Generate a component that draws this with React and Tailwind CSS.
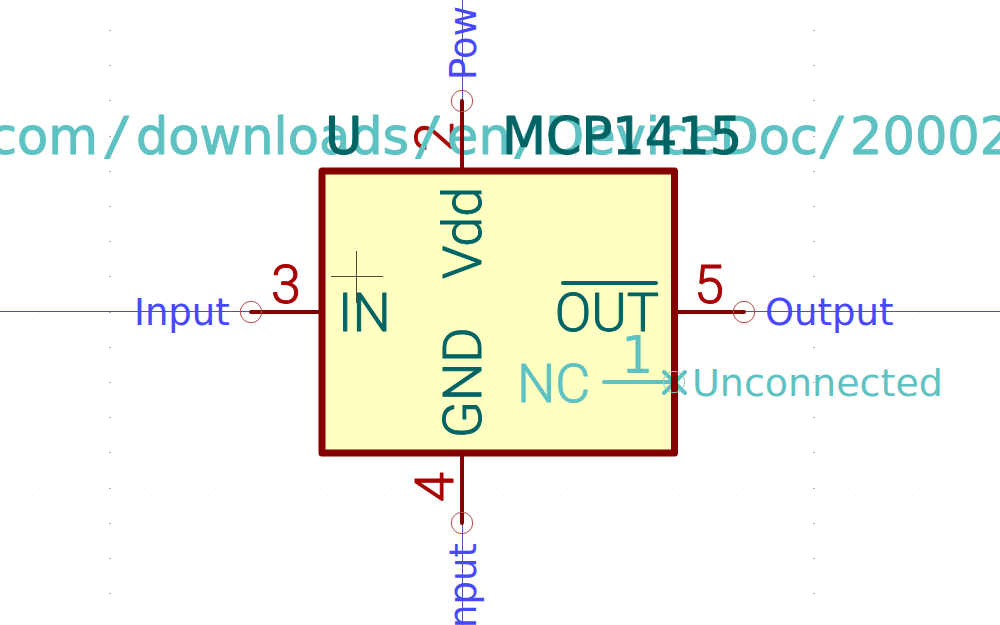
const STEP = 35.2;
const ORIGIN_X = 110;
const ORIGIN_Y = 30.5;

const columns = Array.from({ length: 29 }, (_, i) => i - 3);
const rows = Array.from({ length: 18 }, (_, i) => i);

function Grid() {
  return (
    <g>
      {columns.map((c) =>
        rows.map((r) => (
          <rect
            key={c + ":" + r}
            x={Math.round(ORIGIN_X + c * STEP - 1)}
            y={Math.round(ORIGIN_Y + r * STEP - 0.5)}
            width={c % 20 === 0 ? 2 : 1}
            height="1"
            className={c % 20 === 0 ? "fill-[#b4b4b4]" : "fill-[#e4e4e4]"}
          />
        ))
      )}
    </g>
  );
}

function Pin({ x1, y1, x2, y2 }) {
  return (
    <g>
      <line x1={x1} y1={y1} x2={x2} y2={y2} strokeWidth="4" strokeLinecap="round" className="stroke-[#840000]" />
      <circle cx={x1} cy={y1} r="10.7" strokeWidth="1" className="fill-none stroke-[#b44848]" />
    </g>
  );
}

function Label({ x, y, up, anchor, className, children }) {
  return (
    <text
      x={x}
      y={y}
      textAnchor={anchor || "start"}
      strokeLinejoin="round"
      transform={up ? `rotate(-90 ${x} ${y})` : undefined}
      className={className}
    >
      {children}
    </text>
  );
}

const netLabel = "font-['DejaVu_Sans',sans-serif] text-[37px] fill-[#4848ff]";
const field = "font-['DejaVu_Sans',sans-serif] text-[51px] fill-[#006464] stroke-[#006464] stroke-1";
const pinName = "font-['Roboto',sans-serif] text-[54px] font-light fill-[#006464] stroke-[#006464] stroke-1";
const pinNumber = "font-['Roboto',sans-serif] text-[54px] font-light fill-[#a90000] stroke-[#a90000] stroke-1";
const slash = "font-['DejaVu_Sans_Mono',monospace]";

export default function App() {
  return (
    <main className="h-screen w-full overflow-hidden bg-white">
      <svg viewBox="0 0 1000 625" preserveAspectRatio="xMidYMid slice" className="block h-full w-full" aria-label="MCP1415 schematic symbol">
        <Grid />

        <rect x="322" y="171" width="352.5" height="282" className="fill-[#ffffc2]" />

        <g strokeWidth="1" className="stroke-[#5050b8]">
          <path d="M0 311.5H251M744 311.5H1000M462.5 0V101M462.5 523V625" />
        </g>

        <g strokeWidth="4" strokeLinecap="round" className="stroke-[#5ec2c2]">
          <path d="M604 382H674" />
          <path d="M664 372L685 393M685 372L664 393" />
        </g>

        <rect x="322" y="171" width="352.5" height="282" strokeWidth="7" strokeLinejoin="round" className="fill-none stroke-[#840000]" />
        <circle cx="674" cy="382" r="10.7" strokeWidth="1" className="fill-none stroke-[#8cc8c8]" />

        <Label x={271} y={303} className={pinNumber}>3</Label>
        <Label x={694} y={303} className={pinNumber}>5</Label>
        <Label x={453} y={152} up className={pinNumber}>2</Label>
        <Label x={453} y={502} up className={pinNumber}>4</Label>

        <Label x={338} y={331} className={pinName}>IN</Label>
        <Label x={659} y={331} anchor="end" className={pinName}>OUT</Label>
        <path d="M563 283H656" strokeWidth="4" strokeLinecap="round" className="stroke-[#006464]" />
        <Label x={481} y={279} up className={pinName}>Vdd</Label>
        <Label x={481} y={438} up className={pinName}>GND</Label>

        <g className="fill-[#5ec2c2] stroke-[#5ec2c2]">
          <Label x={517} y={402} className="font-['Roboto',sans-serif] text-[54px] font-light">NC</Label>
          <Label x={621} y={373} className="font-['DejaVu_Sans',sans-serif] text-[51px] stroke-none">1</Label>
          <Label x={692} y={396} className="font-['DejaVu_Sans',sans-serif] text-[38px] stroke-none">Unconnected</Label>
          <text y="154" strokeLinejoin="round" className="font-['DejaVu_Sans',sans-serif] text-[51px]">
            <tspan x="-11">com</tspan>
            <tspan x="102" className={slash}>/</tspan>
            <tspan x="136">downloads</tspan>
            <tspan x="413" className={slash}>/</tspan>
            <tspan x="447">en</tspan>
            <tspan x="512" className={slash}>/</tspan>
            <tspan x="545">DeviceDoc</tspan>
            <tspan x="817" className={slash}>/</tspan>
            <tspan x="850">20002</tspan>
          </text>
        </g>

        <Pin x1={251} y1={312} x2={320} y2={312} />
        <Pin x1={744} y1={312} x2={676} y2={312} />
        <Pin x1={462} y1={101} x2={462} y2={169} />
        <Pin x1={462} y1={523} x2={462} y2={455} />

        <Label x={325} y={154} className={field}>U</Label>
        <Label x={502} y={154} className={field}>MCP1415</Label>

        <Label x={134} y={325} className={netLabel}>Input</Label>
        <Label x={765} y={325} className={netLabel}>Output</Label>
        <Label x={476} y={80} up className={netLabel}>Pow</Label>
        <Label x={476} y={628} up className={netLabel}>nput</Label>

        <path d="M331 276.5H383M356.5 251V303" strokeWidth="1" className="stroke-[#50503c]" />
      </svg>
    </main>
  );
}
